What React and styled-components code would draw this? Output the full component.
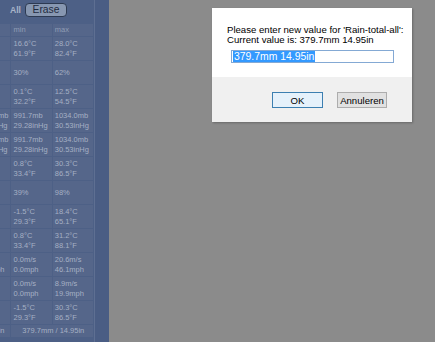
import React from 'react'
import styled, {createGlobalStyle} from "styled-components";

const GlobalStyle = createGlobalStyle`
  html, body {
    margin: 0;
    padding: 0;
    overflow: hidden;
    background: #8b8b8b;
  }
`

// label tails: only the last letters peek out at the left edge
const baro = [{text: 'Baro mb', pr: 2}, {text: 'inHg', pr: 3}]
const rows = [
  {label: [], min: ['16.6°C', '61.9°F'], max: ['28.0°C', '82.4°F']},
  {label: [], min: ['30%'], max: ['62%']},
  {label: [], min: ['0.1°C', '32.2°F'], max: ['12.5°C', '54.5°F']},
  {label: baro, min: ['991.7mb', '29.28inHg'], max: ['1034.0mb', '30.53inHg']},
  {label: baro, min: ['991.7mb', '29.28inHg'], max: ['1034.0mb', '30.53inHg']},
  {label: [], min: ['0.8°C', '33.4°F'], max: ['30.3°C', '86.5°F']},
  {label: [], min: ['39%'], max: ['98%']},
  {label: [], min: ['-1.5°C', '29.3°F'], max: ['18.4°C', '65.1°F']},
  {label: [], min: ['0.8°C', '33.4°F'], max: ['31.2°C', '88.1°F']},
  {label: [{text: '', pr: 0}, {text: 'Wind mph', pr: 6}], min: ['0.0m/s', '0.0mph'], max: ['20.6m/s', '46.1mph']},
  {label: [], min: ['0.0m/s', '0.0mph'], max: ['8.9m/s', '19.9mph']},
  {label: [], min: ['-1.5°C', '29.3°F'], max: ['30.3°C', '86.5°F']},
]

const Page = styled.div`
  display: flex;
  width: 435px;
  height: 342px;
  position: relative;
  font-family: "Liberation Sans", Arial, sans-serif;
`

const Side = styled.aside`
  display: flex;
  width: 109px;
  background-color: #4d6086;
`

const SideMain = styled.div`
  width: 94px;
  overflow: hidden;
  display: flex;
  flex-direction: column;
`

const SideStrip = styled.div`
  flex: 1;
  border-left: 1px solid #5e6f92;
  background-color: #4a5d84;
`

const Toolbar = styled.div`
  height: 23px;
  display: flex;
  align-items: flex-start;
  gap: 4px;
  padding: 3px 0 0 10px;
  box-sizing: border-box;
`

const AllLabel = styled.span`
  font-size: 8.6px;
  font-weight: 700;
  color: #a9b4c8;
  line-height: 14px;
`

const EraseButton = styled.button`
  height: 14px;
  width: 42px;
  padding: 0;
  font-family: inherit;
  font-size: 10.3px;
  line-height: 12px;
  color: #1f2b40;
  background: #8797b1;
  border: 1px solid #2d3a52;
  border-radius: 4px;
`

const Table = styled.table`
  border-collapse: separate;
  border-spacing: 1px;
  margin: 0 0 0 -35px;
  font-size: 7.5px;
  line-height: 10px;
  color: #a5b0c4;
  white-space: nowrap;
`

const Cell = styled.td`
  background-color: #55668a;
  padding: ${p => p.$head ? '1px 0 1px 2px' : '1.5px 0 1.5px 2px'};
  height: ${p => p.$head ? '10px' : '20px'};
  width: ${p => p.$w}px;
  vertical-align: middle;
  text-align: ${p => p.$align || 'left'};
  color: ${p => p.$dim ? '#909db5' : 'inherit'};
`

const LabelCell = styled.td`
  background-color: #55668a;
  width: 42px;
  padding: 0;
  text-align: right;
  vertical-align: middle;
`

const Line = styled.div`
  padding-right: ${p => p.$pr || 0}px;
`

const Backdrop = styled.div`
  flex: 1;
  background-color: #8b8b8b;
`

const Dialog = styled.div`
  position: absolute;
  left: 212px;
  top: 8px;
  width: 200px;
  height: 114px;
  background: #f0f0f0;
  box-shadow: 1px 1px 2px rgba(0, 0, 0, 0.25);
  display: flex;
  flex-direction: column;
  font-size: 9.6px;
  color: #000;
`

const DialogBody = styled.div`
  height: 69px;
  background: #fff;
  padding: 17px 0 0 15px;
  box-sizing: border-box;
  line-height: 10px;
`

const Field = styled.div`
  margin: 5px 0 0 4px;
  width: 163px;
  height: 13px;
  box-sizing: border-box;
  border: 1px solid #84a9d4;
  padding: 1px 0 0 1px;
  font-size: 10.4px;
  line-height: 10px;
`

const Selected = styled.span`
  background: #3399ff;
  color: #fff;
  padding: 0 1px;
`

const Footer = styled.div`
  flex: 1;
  display: flex;
  justify-content: flex-end;
  align-items: flex-start;
  gap: 14px;
  padding: 15px 25px 0 0;
`

const DialogButton = styled.button`
  height: 16px;
  width: ${p => p.$w}px;
  padding: 0;
  font-family: inherit;
  font-size: 9.6px;
  color: #000;
  background: ${p => p.$primary ? '#e5f1fb' : '#e1e1e1'};
  border: 1px solid ${p => p.$primary ? '#3c7fb1' : '#adadad'};
  border-radius: 0;
`

const Lines = ({items}) => items.map((t, i) => <Line key={i}>{t || '\u00a0'}</Line>)

const App = () => {
  return (
    <Page>
      <GlobalStyle/>
      <Side>
        <SideMain>
          <Toolbar>
            <AllLabel>All</AllLabel>
            <EraseButton>Erase</EraseButton>
          </Toolbar>
          <Table>
            <tbody>
              <tr>
                <LabelCell/>
                <Cell $head $dim $w={36}>min</Cell>
                <Cell $head $dim $w={36}>max</Cell>
              </tr>
              {rows.map((row, index) => (
                <tr key={`row-${index}`}>
                  <LabelCell>
                    {row.label.map((l, i) => <Line key={i} $pr={l.pr}>{l.text || '\u00a0'}</Line>)}
                  </LabelCell>
                  <Cell $w={36}><Lines items={row.min}/></Cell>
                  <Cell $w={36}><Lines items={row.max}/></Cell>
                </tr>
              ))}
              <tr>
                <LabelCell><Line $pr={6}>Rain</Line></LabelCell>
                <Cell $head colSpan={2} $align="center">379.7mm / 14.95in</Cell>
              </tr>
            </tbody>
          </Table>
        </SideMain>
        <SideStrip/>
      </Side>
      <Backdrop/>
      <Dialog>
        <DialogBody>
          <Line>Please enter new value for 'Rain-total-all':</Line>
          <Line>Current value is: 379.7mm 14.95in</Line>
          <Field><Selected>379.7mm 14.95in</Selected></Field>
        </DialogBody>
        <Footer>
          <DialogButton $primary $w={51}>OK</DialogButton>
          <DialogButton $w={50}>Annuleren</DialogButton>
        </Footer>
      </Dialog>
    </Page>
  )
}

export default App
